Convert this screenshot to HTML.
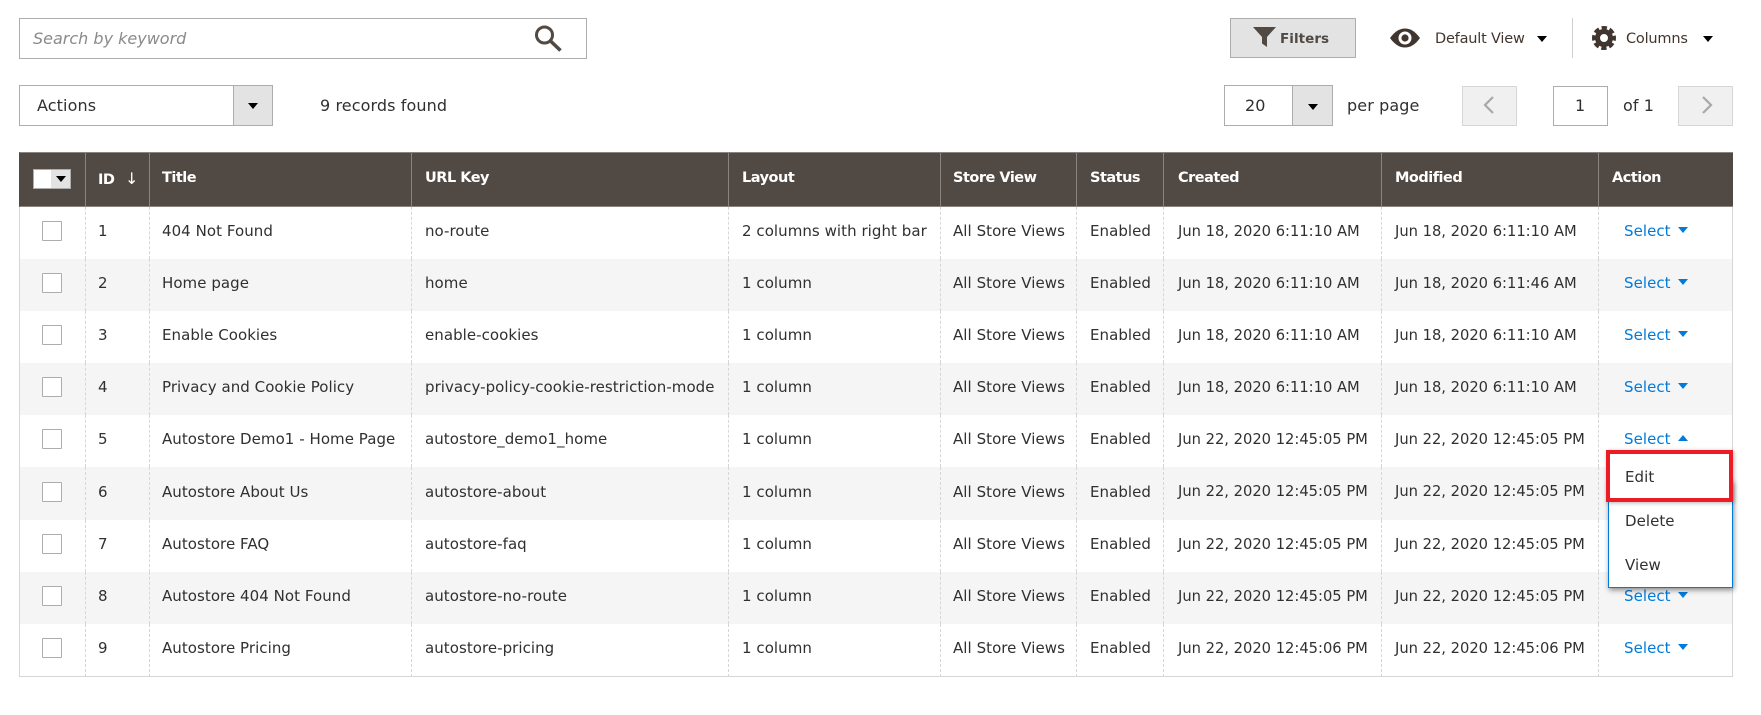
<!DOCTYPE html>
<html><head><meta charset="utf-8"><title>Pages</title>
<style>
html,body{margin:0;padding:0;background:#fff}
body{width:1761px;height:715px;position:relative;overflow:hidden;font-family:"DejaVu Sans","Liberation Sans",sans-serif;font-size:15px;letter-spacing:.05px;color:#303030}
.a{position:absolute;box-sizing:border-box}
.t{position:absolute;white-space:nowrap;line-height:20px}
.b{font-size:16px;letter-spacing:.1px}
.box{border:1px solid #adadad;background:#fff}
.btn{background:#e3e3e3;border:1px solid #adadad}
.car{position:absolute;width:0;height:0;border-left:5px solid transparent;border-right:5px solid transparent;border-top:6px solid #000}
table{position:absolute;left:19px;top:152px;width:1714px;border-collapse:separate;border-spacing:0;table-layout:fixed}
th{height:55px;box-sizing:border-box;background:#514943;color:#fff;font-weight:bold;font-size:14.5px;letter-spacing:-.5px;text-align:left;padding:0 0 3px 13px;border-left:1px solid #8a837f;border-top:1px solid #8a837f;border-bottom:1px solid #8a837f;white-space:nowrap}
th:first-child{border-left-color:#514943}
td{height:52px;box-sizing:border-box;padding:0 0 4px 13px;border-left:1px dashed #d6d6d6;white-space:nowrap;overflow:visible;vertical-align:middle}
td:first-child{border-left:1px solid #d6d6d6;padding:0}
td:last-child{border-right:1px solid #d6d6d6}
td:nth-child(2),th:nth-child(2),td:nth-child(3),th:nth-child(3),td:nth-child(6),th:nth-child(6){padding-left:12px}
td:nth-child(8),th:nth-child(8){padding-left:14px}
td:nth-child(8),td:nth-child(9){font-size:14.7px;letter-spacing:0}
tr:nth-child(even) td{background:#f5f5f5}
tr.s td{height:53px}
tbody tr:last-child td{border-bottom:1px solid #d6d6d6;height:53px}
.cb{display:block;width:20px;height:20px;box-sizing:border-box;border:1px solid #adadad;border-radius:1px;background:#fff;margin:0 0 0 22px;position:relative;top:-2px}
.sel{color:#007bdb;padding-left:12px;position:relative;display:inline-block;width:100px}
.sel i{position:absolute;left:66px;top:5px;width:0;height:0;border-left:5px solid transparent;border-right:5px solid transparent;border-top:6px solid #007bdb}
.sel i.up{border-top:0;border-bottom:6px solid #007bdb}
</style></head><body>

<div class="a box" style="left:19px;top:18px;width:568px;height:41px"></div>
<div class="t b" style="left:33px;top:29px;font-style:italic;color:#8a8a8a;letter-spacing:0">Search by keyword</div>
<svg class="a" style="left:534px;top:24px" width="30" height="30" viewBox="0 0 30 30"><circle cx="10.5" cy="11" r="8" fill="none" stroke="#514943" stroke-width="3"/><path d="M16.5 17l10 9.5" stroke="#514943" stroke-width="3.6" fill="none"/></svg>

<div class="a box" style="left:19px;top:85px;width:254px;height:41px"></div>
<div class="a btn" style="left:233px;top:85px;width:40px;height:41px"></div>
<div class="car" style="left:248px;top:103px"></div>
<div class="t b" style="left:37px;top:96px">Actions</div>
<div class="t b" style="left:320px;top:96px">9 records found</div>

<div class="a btn" style="left:1230px;top:18px;width:126px;height:40px"></div>
<svg class="a" style="left:1253px;top:27px" width="23" height="20" viewBox="0 0 23 20"><path d="M0 0H23L14 10V20L9 16.5V10Z" fill="#514943"/></svg>
<div class="t" style="left:1280px;top:29px;font-weight:bold;font-size:13.5px;color:#514943">Filters</div>
<svg class="a" style="left:1390px;top:28px" width="30" height="20" viewBox="0 0 30 20"><path d="M0 10C5 3 10 .5 15 .5S25 3 30 10C25 17 20 19.5 15 19.5S5 17 0 10Z" fill="#41362f"/><circle cx="15" cy="10" r="6.5" fill="#fff"/><circle cx="15" cy="10" r="3.6" fill="#41362f"/></svg>
<div class="t" style="left:1435px;top:29px;font-size:14.5px;color:#41362f;letter-spacing:-.2px">Default View</div>
<div class="car" style="left:1537px;top:36px"></div>
<div class="a" style="left:1572px;top:18px;width:1px;height:40px;background:#cfcfcf"></div>
<svg class="a" style="left:1592px;top:26px" width="24" height="24" viewBox="0 0 24 24"><circle cx="12" cy="12" r="6.5" fill="none" stroke="#41362f" stroke-width="5"/><circle cx="12" cy="12" r="10" fill="none" stroke="#41362f" stroke-width="4" stroke-dasharray="5.2 2.65" stroke-dashoffset="2.6"/></svg>
<div class="t" style="left:1626px;top:29px;font-size:14.5px;color:#41362f;letter-spacing:-.2px">Columns</div>
<div class="car" style="left:1703px;top:36px"></div>

<div class="a box" style="left:1224px;top:85px;width:109px;height:41px"></div>
<div class="a btn" style="left:1292px;top:85px;width:41px;height:41px"></div>
<div class="car" style="left:1308px;top:104px"></div>
<div class="t b" style="left:1245px;top:96px">20</div>
<div class="t b" style="left:1347px;top:96px">per page</div>
<div class="a" style="left:1462px;top:86px;width:55px;height:40px;background:#f0f0f0;border:1px solid #d6d6d6"></div>
<svg class="a" style="left:1482px;top:95px" width="14" height="20" viewBox="0 0 14 20"><path d="M11 2L3 10l8 8" fill="none" stroke="#a8a8a8" stroke-width="2.2"/></svg>
<div class="a box" style="left:1553px;top:86px;width:55px;height:40px"></div>
<div class="t b" style="left:1575px;top:96px">1</div>
<div class="t b" style="left:1623px;top:96px">of 1</div>
<div class="a" style="left:1678px;top:86px;width:55px;height:40px;background:#f0f0f0;border:1px solid #d6d6d6"></div>
<svg class="a" style="left:1700px;top:95px" width="14" height="20" viewBox="0 0 14 20"><path d="M3 2l8 8-8 8" fill="none" stroke="#a8a8a8" stroke-width="2.2"/></svg>

<table>
<colgroup><col style="width:66px"><col style="width:64px"><col style="width:262px"><col style="width:317px"><col style="width:212px"><col style="width:136px"><col style="width:87px"><col style="width:218px"><col style="width:217px"><col style="width:135px"></colgroup>
<thead><tr><th></th><th>ID <span style="font-weight:normal;font-size:16px;margin-left:6px">↓</span></th><th>Title</th><th>URL Key</th><th>Layout</th><th>Store View</th><th>Status</th><th>Created</th><th>Modified</th><th>Action</th></tr></thead>
<tbody>
<tr><td><span class="cb"></span></td><td>1</td><td>404 Not Found</td><td>no-route</td><td>2 columns with right bar</td><td>All Store Views</td><td>Enabled</td><td>Jun 18, 2020 6:11:10 AM</td><td>Jun 18, 2020 6:11:10 AM</td><td><span class="sel">Select<i></i></span></td></tr>
<tr><td><span class="cb"></span></td><td>2</td><td>Home page</td><td>home</td><td>1 column</td><td>All Store Views</td><td>Enabled</td><td>Jun 18, 2020 6:11:10 AM</td><td>Jun 18, 2020 6:11:46 AM</td><td><span class="sel">Select<i></i></span></td></tr>
<tr><td><span class="cb"></span></td><td>3</td><td>Enable Cookies</td><td>enable-cookies</td><td>1 column</td><td>All Store Views</td><td>Enabled</td><td>Jun 18, 2020 6:11:10 AM</td><td>Jun 18, 2020 6:11:10 AM</td><td><span class="sel">Select<i></i></span></td></tr>
<tr><td><span class="cb"></span></td><td>4</td><td>Privacy and Cookie Policy</td><td>privacy-policy-cookie-restriction-mode</td><td>1 column</td><td>All Store Views</td><td>Enabled</td><td>Jun 18, 2020 6:11:10 AM</td><td>Jun 18, 2020 6:11:10 AM</td><td><span class="sel">Select<i></i></span></td></tr>
<tr><td><span class="cb"></span></td><td>5</td><td>Autostore Demo1 - Home Page</td><td>autostore_demo1_home</td><td>1 column</td><td>All Store Views</td><td>Enabled</td><td>Jun 22, 2020 12:45:05 PM</td><td>Jun 22, 2020 12:45:05 PM</td><td><span class="sel">Select<i class="up"></i></span></td></tr>
<tr class="s"><td><span class="cb"></span></td><td>6</td><td>Autostore About Us</td><td>autostore-about</td><td>1 column</td><td>All Store Views</td><td>Enabled</td><td>Jun 22, 2020 12:45:05 PM</td><td>Jun 22, 2020 12:45:05 PM</td><td><span class="sel">Select<i></i></span></td></tr>
<tr><td><span class="cb"></span></td><td>7</td><td>Autostore FAQ</td><td>autostore-faq</td><td>1 column</td><td>All Store Views</td><td>Enabled</td><td>Jun 22, 2020 12:45:05 PM</td><td>Jun 22, 2020 12:45:05 PM</td><td><span class="sel">Select<i></i></span></td></tr>
<tr><td><span class="cb"></span></td><td>8</td><td>Autostore 404 Not Found</td><td>autostore-no-route</td><td>1 column</td><td>All Store Views</td><td>Enabled</td><td>Jun 22, 2020 12:45:05 PM</td><td>Jun 22, 2020 12:45:05 PM</td><td><span class="sel">Select<i></i></span></td></tr>
<tr><td><span class="cb"></span></td><td>9</td><td>Autostore Pricing</td><td>autostore-pricing</td><td>1 column</td><td>All Store Views</td><td>Enabled</td><td>Jun 22, 2020 12:45:06 PM</td><td>Jun 22, 2020 12:45:06 PM</td><td><span class="sel">Select<i></i></span></td></tr>
</tbody></table>

<div class="a" style="left:33px;top:169px;width:38px;height:20px;background:#e3e3e3;border:1px solid #adadad"></div>
<div class="a" style="left:34px;top:170px;width:17px;height:18px;background:#fff"></div>
<div class="car" style="left:56px;top:176px"></div>

<div class="a" style="left:1608px;top:480px;width:125px;height:108px;background:#fff;border:1px solid #007bdb;box-shadow:1px 2px 5px rgba(0,0,0,.45)"></div>
<div class="a" style="left:1606px;top:450px;width:127px;height:52px;background:#fff;border:4.5px solid #ed1c24;box-shadow:1px 1px 4px rgba(0,0,0,.3)"></div>
<div class="t" style="left:1625px;top:467px">Edit</div>
<div class="t" style="left:1625px;top:511px">Delete</div>
<div class="t" style="left:1625px;top:555px">View</div>
</body></html>
